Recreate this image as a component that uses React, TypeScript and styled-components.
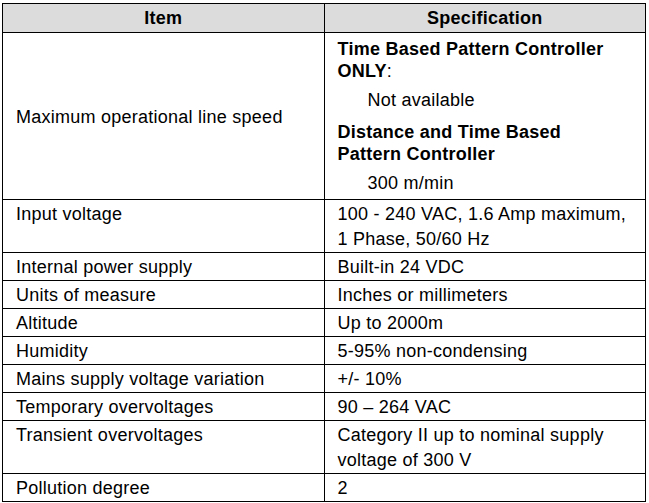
import styled, { createGlobalStyle } from "styled-components";

const GlobalStyle = createGlobalStyle`
    html, body {
        margin: 0;
        padding: 0;
        background: #ffffff;
    }
    body {
        font-family: "Liberation Sans", Arial, sans-serif;
        color: #000000;
    }
`;

const Page = styled.div`
    padding: 3px 0 0 2px;
`;

const SpecTable = styled.table`
    width: 644px;
    border-collapse: collapse;
    table-layout: fixed;
    font-size: 18px;
    letter-spacing: 0.25px;
`;

const HeadCell = styled.th`
    background: #dcdcdc;
    border: 1px solid #000;
    height: 28px;
    padding: 0;
    font-weight: bold;
    text-align: center;
    vertical-align: middle;
    line-height: 22px;
`;

const Cell = styled.td<{ $middle?: boolean }>`
    border: 1px solid #000;
    padding: 2px 10px 0 13px;
    line-height: 25px;
    vertical-align: ${(p) => (p.$middle ? "middle" : "top")};
    text-align: left;
`;

const Heading = styled.div`
    font-weight: bold;
    line-height: 22px;
    margin-top: 3px;
`;

const Plain = styled.span`
    font-weight: normal;
`;

const Value = styled.div`
    padding-left: 30px;
    margin: 6px 0 8px;
`;

const LastValue = styled(Value)`
    margin-bottom: 3px;
`;

type Row = { item: string; spec: React.ReactNode };

const rows: Row[] = [
    {
        item: "Input voltage",
        spec: (
            <>
                100 - 240 VAC, 1.6 Amp maximum,
                <br />1 Phase, 50/60 Hz
            </>
        ),
    },
    { item: "Internal power supply", spec: "Built-in 24 VDC" },
    { item: "Units of measure", spec: "Inches or millimeters" },
    { item: "Altitude", spec: "Up to 2000m" },
    { item: "Humidity", spec: "5-95% non-condensing" },
    { item: "Mains supply voltage variation", spec: "+/- 10%" },
    { item: "Temporary overvoltages", spec: "90 \u2013 264 VAC" },
    {
        item: "Transient overvoltages",
        spec: (
            <>
                Category II up to nominal supply
                <br />
                voltage of 300 V
            </>
        ),
    },
    { item: "Pollution degree", spec: "2" },
];

export default function App() {
    return (
        <Page>
            <GlobalStyle />
            <SpecTable>
                <thead>
                    <tr>
                        <HeadCell>Item</HeadCell>
                        <HeadCell>Specification</HeadCell>
                    </tr>
                </thead>
                <tbody>
                    <tr>
                        <Cell $middle>Maximum operational line speed</Cell>
                        <Cell>
                            <Heading>
                                Time Based Pattern Controller
                                <br />
                                ONLY<Plain>:</Plain>
                            </Heading>
                            <Value>Not available</Value>
                            <Heading>
                                Distance and Time Based
                                <br />
                                Pattern Controller
                            </Heading>
                            <LastValue>300 m/min</LastValue>
                        </Cell>
                    </tr>
                    {rows.map((r) => (
                        <tr key={r.item}>
                            <Cell>{r.item}</Cell>
                            <Cell>{r.spec}</Cell>
                        </tr>
                    ))}
                </tbody>
            </SpecTable>
        </Page>
    );
}
